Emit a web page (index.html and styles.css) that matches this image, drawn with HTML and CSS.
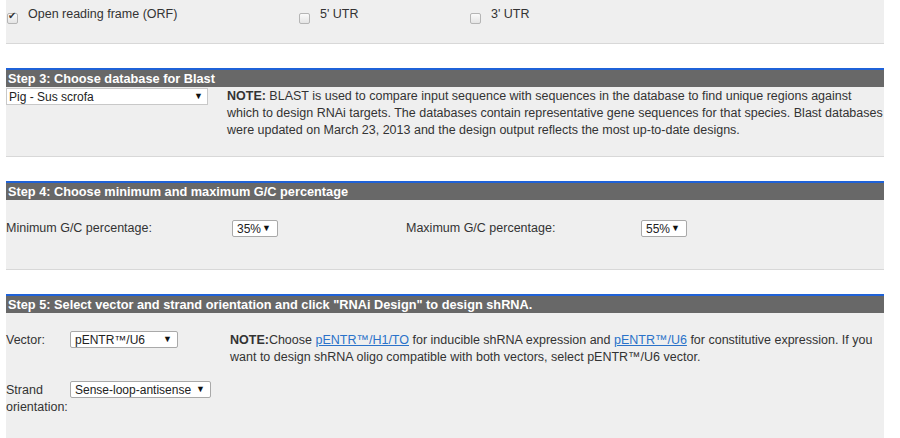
FILE: index.html
```html
<!DOCTYPE html>
<html lang="en">
<head>
    <meta charset="UTF-8">
    <title>RNAi Designer</title>
    <link rel="stylesheet" href="styles.css">
</head>
<body>
    <div class="step step-2">
        <div class="step-body region-row">
            <label class="check"><input type="checkbox" checked> Open reading frame (ORF)</label>
            <label class="check utr5"><input type="checkbox"> 5' UTR</label>
            <label class="check utr3"><input type="checkbox"> 3' UTR</label>
        </div>
    </div>

    <div class="step">
        <div class="step-title">Step 3: Choose database for Blast</div>
        <div class="step-body blast-row">
            <span class="dropdown db-select">
                <select>
                    <option>Pig - Sus scrofa</option>
                </select>
            </span>
            <p class="note">
                <b>NOTE:</b> BLAST is used to compare input sequence with sequences in the database to find unique regions against which to design RNAi targets. The databases contain representative gene sequences for that species. Blast databases were updated on March 23, 2013 and the design output reflects the most up-to-date designs.
            </p>
        </div>
    </div>

    <div class="step">
        <div class="step-title">Step 4: Choose minimum and maximum G/C percentage</div>
        <div class="step-body gc-row">
            <span class="gc-label">Minimum G/C percentage:</span>
            <span class="dropdown small-select">
                <select>
                    <option>35%</option>
                </select>
            </span>
            <span class="gc-label max-label">Maximum G/C percentage:</span>
            <span class="dropdown small-select">
                <select>
                    <option>55%</option>
                </select>
            </span>
        </div>
    </div>

    <div class="step">
        <div class="step-title">Step 5: Select vector and strand orientation and click "RNAi Design" to design shRNA.</div>
        <div class="step-body vector-grid">
            <span class="field-label">Vector:</span>
            <span class="dropdown vector-select">
                <select>
                    <option>pENTR™/U6</option>
                </select>
            </span>
            <p class="note vector-note">
                <b>NOTE:</b>Choose <a href="#">pENTR™/H1/TO</a> for inducible shRNA expression and <a href="#">pENTR™/U6</a> for constitutive expression. If you want to design shRNA oligo compatible with both vectors, select pENTR™/U6 vector.
            </p>
            <span class="field-label strand-label">Strand orientation:</span>
            <span class="dropdown strand-select">
                <select>
                    <option>Sense-loop-antisense</option>
                </select>
            </span>
        </div>
    </div>
</body>
</html>
```

FILE: styles.css
```css
:root {
    --panel-bg: #efefef;
    --panel-line: #d8d8d8;
    --title-bg: #686868;
    --title-line: #1f62d8;
    --text-color: #333;
    --link-color: #2a72c9;
}

body {
    margin: 0;
    font-family: "Liberation Sans", Arial, sans-serif;
    font-size: 12.5px;
    line-height: 17px;
    color: var(--text-color);
    background: #fff;
}

.step {
    margin: 24px 16px 0 6px;
    background: var(--panel-bg);
    border-bottom: 1px solid var(--panel-line);
}

.step-2 {
    margin-top: 0;
}

.step-title {
    height: 17px;
    line-height: 17px;
    padding-left: 2px;
    border-top: 2px solid var(--title-line);
    background: var(--title-bg);
    color: #fff;
    font-size: 12.75px;
    font-weight: bold;
    white-space: nowrap;
    overflow: hidden;
}

.note {
    margin: 0;
}

a {
    color: var(--link-color);
}

/* checkboxes */
.region-row {
    display: flex;
    align-items: flex-start;
    height: 43px;
    padding-top: 6px;
    box-sizing: border-box;
}

.check {
    display: flex;
    align-items: flex-start;
    gap: 10px;
}

.check input {
    appearance: none;
    flex: none;
    width: 11px;
    height: 11px;
    margin: 7px 0 0 1px;
    border: 1px solid #b5b5b5;
    border-radius: 2px;
    background: linear-gradient(#fbfbfb, #e4e4e4);
    position: relative;
}

.check input:checked::after {
    content: "✔";
    position: absolute;
    left: 0;
    top: -4px;
    font-size: 10px;
    color: #333;
}

.check:first-child {
    width: 292px;
}

.utr5 {
    width: 171px;
}

/* dropdowns */
.dropdown {
    position: relative;
    display: inline-block;
    height: 17px;
}

.dropdown select {
    appearance: none;
    width: 100%;
    height: 17px;
    margin: 0;
    padding: 0 14px 0 4px;
    border: 1px solid #a9a9a9;
    border-radius: 2px;
    background: #fff;
    font-family: inherit;
    font-size: 12px;
    color: #222;
    box-sizing: border-box;
}

.dropdown::after {
    content: "▼";
    position: absolute;
    right: 6px;
    top: 0;
    font-size: 9px;
    color: #111;
    pointer-events: none;
}

/* step 3 */
.blast-row {
    display: flex;
    align-items: flex-start;
    gap: 19px;
    padding: 1px 0 17px;
}

.db-select {
    flex: 0 0 202px;
}

.db-select select {
    padding-left: 2px;
    border-radius: 0;
    border-color: #c8c8c8;
}

.db-select::after {
    right: 5px;
}

/* step 4 */
.gc-row {
    display: flex;
    align-items: center;
    height: 69px;
    padding-bottom: 12px;
    box-sizing: border-box;
}

.gc-label {
    width: 226px;
}

.max-label {
    margin-left: 128px;
    width: 235px;
}

.small-select {
    width: 46px;
}

.small-select::after {
    right: 7px;
}

/* step 5 */
.vector-grid {
    display: grid;
    grid-template-columns: 64px 160px 1fr;
    align-items: start;
    row-gap: 15px;
    padding: 18px 0 32px;
}

.field-label {
    padding-top: 1px;
}

.vector-select {
    width: 108px;
}

.strand-label {
    width: 60px;
}

.strand-select {
    width: 141px;
    grid-column: 2 / 4;
}

.vector-note {
    padding-top: 1px;
}
```
